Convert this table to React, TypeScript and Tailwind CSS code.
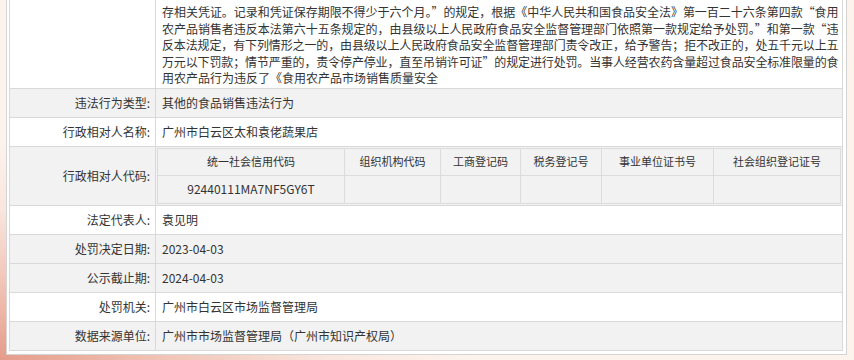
import React from 'react'

// Penalty record detail table (行政处罚信息)
const FONT = { fontFamily: '"Noto Sans CJK SC", "Microsoft YaHei", sans-serif' }

const BASIS_LINES = [
  '存相关凭证。记录和凭证保存期限不得少于六个月。”的规定，根据《中华人民共和国食品安全法》第一百二十六条第四款“食用',
  '农产品销售者违反本法第六十五条规定的，由县级以上人民政府食品安全监督管理部门依照第一款规定给予处罚。”和第一款“违',
  '反本法规定，有下列情形之一的，由县级以上人民政府食品安全监督管理部门责令改正，给予警告；拒不改正的，处五千元以上五',
  '万元以下罚款；情节严重的，责令停产停业，直至吊销许可证”的规定进行处罚。当事人经营农药含量超过食品安全标准限量的食',
]

const CODE_COLUMNS = [
  { title: '统一社会信用代码', value: '92440111MA7NF5GY6T', w: 'w-[187px]' },
  { title: '组织机构代码', value: '', w: 'w-[96px]' },
  { title: '工商登记码', value: '', w: 'w-[80px]' },
  { title: '税务登记号', value: '', w: 'w-[81px]' },
  { title: '事业单位证书号', value: '', w: 'w-[112px]' },
  { title: '社会组织登记证号', value: '', w: 'flex-1' },
]

function Row({ label, gray, children }: { label: string; gray?: boolean; children: React.ReactNode }) {
  return (
    <div className={`flex border-t border-[#d9d9d9] ${gray ? 'bg-[#f2f2f2]' : 'bg-white'}`}>
      <div className="w-[146px] shrink-0 border-r border-[#d9d9d9] h-[28px] flex items-center justify-end pr-[5px]">
        {label}
      </div>
      <div className="flex-1 h-[28px] flex items-center pl-[6px]">{children}</div>
    </div>
  )
}

export default function App() {
  return (
    <div
      className="relative w-[854px] h-[360px] overflow-hidden bg-[#fcf3ed] bg-[radial-gradient(55%_60%_at_0%_100%,#e59c8b_0%,#f1c4b6_35%,#f9e6de_70%,transparent_100%)] text-[12px] text-[#333]"
      style={FONT}
    >
      <div className="ml-[6px] w-[841px] bg-white border-x border-b border-[#d4d4d4] pl-[2px] pr-[3px] pb-[3px]">
        <div className="border-x border-b border-[#d9d9d9]">
          {/* legal basis paragraph, scrolled partway */}
          <div className="flex bg-white">
            <div className="w-[146px] shrink-0 border-r border-[#d9d9d9]" />
            <div className="flex-1 min-w-0 pl-[6px] pr-[4px] pt-[4px] pb-px leading-[16.5px]">
              {BASIS_LINES.map(line => (
                <div
                  key={line}
                  className="text-justify [text-align-last:justify] whitespace-nowrap tracking-[-0.6px]"
                >
                  {line}
                </div>
              ))}
              <div>用农产品行为违反了《食用农产品市场销售质量安全</div>
            </div>
          </div>

          <Row label="违法行为类型:" gray>其他的食品销售违法行为</Row>
          <Row label="行政相对人名称:">广州市白云区太和袁佬蔬果店</Row>

          {/* code table */}
          <div className="flex border-t border-[#d9d9d9] bg-[#f2f2f2]">
            <div className="w-[146px] shrink-0 border-r border-[#d9d9d9] flex items-center justify-end pr-[5px]">
              行政相对人代码:
            </div>
            <div className="flex-1 p-px">
              <div className="flex border border-[#dcdcdc] bg-[#f2f2f2]">
                {CODE_COLUMNS.map((c, i) => (
                  <div
                    key={c.title}
                    className={`${c.w} ${i < CODE_COLUMNS.length - 1 ? 'border-r border-[#dcdcdc]' : ''} flex flex-col`}
                  >
                    <div className="h-[27px] flex items-center justify-center text-[11px] border-b border-[#dcdcdc]">
                      {c.title}
                    </div>
                    <div className="h-[27px] flex items-center justify-center">{c.value}</div>
                  </div>
                ))}
              </div>
            </div>
          </div>

          <Row label="法定代表人:">袁见明</Row>
          <Row label="处罚决定日期:" gray>2023-04-03</Row>
          <Row label="公示截止期:" gray>2024-04-03</Row>
          <Row label="处罚机关:">广州市白云区市场监督管理局</Row>
          <Row label="数据来源单位:" gray>广州市市场监督管理局（广州市知识产权局）</Row>
        </div>
      </div>
    </div>
  )
}
